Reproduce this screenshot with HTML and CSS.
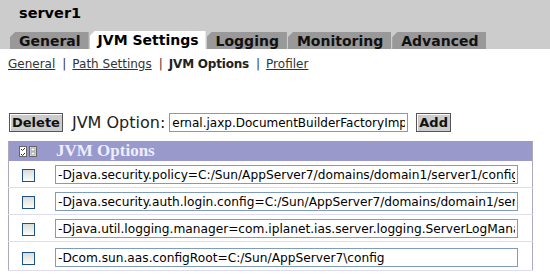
FILE: index.html
```html
<!DOCTYPE html>
<html lang="en">
<head>
  <meta charset="utf-8">
  <title>server1 - JVM Options</title>
  <link rel="stylesheet" href="styles.css">
</head>
<body>
  <div class="topbar">
    <div class="title">server1</div>
    <div class="tabs">
      <span class="tab">General</span>
      <span class="tab active">JVM Settings</span>
      <span class="tab">Logging</span>
      <span class="tab">Monitoring</span>
      <span class="tab">Advanced</span>
    </div>
  </div>

  <div class="subnav"><a href="#">General</a><span class="sep">|</span><a href="#">Path Settings</a><span class="sep">|</span><b>JVM Options</b><span class="sep">|</span><a href="#">Profiler</a></div>

  <div class="addrow">
    <button class="btn">Delete</button>
    <label class="optlabel">JVM Option:</label>
    <input type="text" class="optinput" value="ernal.jaxp.DocumentBuilderFactoryImpl">
    <button class="btn">Add</button>
  </div>

  <table class="opts">
    <tr class="head">
      <th class="selcol">
        <svg width="18" height="11" viewBox="0 0 18 11">
          <rect x="0.5" y="0.5" width="7" height="10" fill="#fff" stroke="#666"/>
          <path d="M2 3l1.5 1.5L6 2M2 8l1.5 1.5L6 7" stroke="#333" fill="none"/>
          <rect x="10.5" y="0.5" width="7" height="10" fill="#fff" stroke="#666"/>
          <rect x="12" y="2" width="4" height="3" fill="none" stroke="#999"/>
          <rect x="12" y="6" width="4" height="3" fill="none" stroke="#999"/>
        </svg>
      </th>
      <th class="namecol">JVM Options</th>
    </tr>
    <tr>
      <td class="selcol"><span class="chk"></span></td>
      <td><input type="text" class="rowinput" value="-Djava.security.policy=C:/Sun/AppServer7/domains/domain1/server1/config/server.policy"></td>
    </tr>
    <tr>
      <td class="selcol"><span class="chk"></span></td>
      <td><input type="text" class="rowinput" value="-Djava.security.auth.login.config=C:/Sun/AppServer7/domains/domain1/server1/config/login.conf"></td>
    </tr>
    <tr>
      <td class="selcol"><span class="chk"></span></td>
      <td><input type="text" class="rowinput" value="-Djava.util.logging.manager=com.iplanet.ias.server.logging.ServerLogManager"></td>
    </tr>
    <tr class="last">
      <td class="selcol"><span class="chk"></span></td>
      <td><input type="text" class="rowinput" value="-Dcom.sun.aas.configRoot=C:/Sun/AppServer7\config"></td>
    </tr>
  </table>
</body>
</html>
```

FILE: styles.css
```css
body{margin:0;font-family:"DejaVu Sans",Verdana,sans-serif;color:#000;background:#fff;overflow:hidden}

.topbar{background:#cccccc;height:49px}
.title{font-weight:bold;font-size:14.5px;padding:5px 0 0 19px;height:31px;box-sizing:border-box}
.tabs{display:flex;gap:1px;padding-left:10px;align-items:flex-end;height:18px}
.tab{background:#999;font-weight:bold;font-size:14px;height:17px;line-height:18px;padding:0 8px 0 9px;
  clip-path:polygon(5px 0,100% 0,100% 100%,0 100%,0 5px);color:#111}
.tab.active{background:#fff;height:18px;color:#000;padding:0 7px 0 8px}

.subnav{font-size:12px;padding:8px 0 0 8px;color:#222}
.subnav a{color:#333}
.subnav b{color:#222;letter-spacing:-0.2px}
.sep{margin:0 6px 0 7px;color:#333}

.addrow{display:flex;align-items:center;margin:42px 0 0 9px;height:19px}
.btn{font-family:inherit;font-weight:bold;font-size:13px;background:#ccc;border:1px solid #555;
  box-shadow:inset 1px 1px 0 #fff;padding:0 2px;height:19px;line-height:16px;color:#111}
.optlabel{font-size:16px;margin:0 4px 0 9px;color:#222}
.optinput{font-family:inherit;font-size:12px;width:239px;height:19px;box-sizing:border-box;
  border:1px solid #7f9db9;padding:0 2px;margin-right:8px}

.opts{border-collapse:collapse;margin:9px 0 0 8px;width:525px;border-left:1px solid #aab;border-right:1px solid #aab}
.opts th{background:#9999cc;color:#eeeeff;text-align:left;height:20px;padding:0}
.opts .namecol{font-family:"Liberation Serif","Times New Roman",serif;font-size:17px;padding-left:12px}
.opts .selcol{width:35px;text-align:center;padding:0}
.opts th.selcol svg{display:block;margin:0 auto 0 10px}
.opts td{height:26px;border-bottom:1px solid #dde;padding:0}
.opts tr.last td{padding-top:2px;height:26px}
.chk{display:inline-block;width:11px;height:11px;border:1px solid #1c5180;background:linear-gradient(#dcdcd7,#fbfbf9);
  vertical-align:middle;margin-left:3px}
.rowinput{font-family:inherit;font-size:12.2px;width:463px;height:19px;box-sizing:border-box;
  border:1px solid #7f9db9;padding:0 2px;margin-left:11px}
```
